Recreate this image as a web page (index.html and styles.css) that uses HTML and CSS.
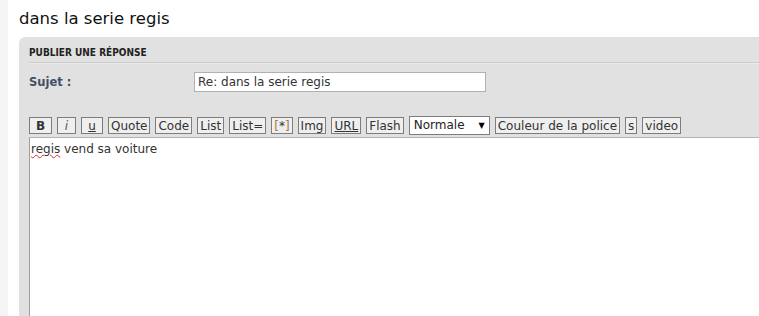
FILE: index.html
```html
<!DOCTYPE html>
<html lang="fr">

<head>
    <meta charset="UTF-8">
    <title>dans la serie regis</title>
    <link rel="stylesheet" href="styles.css">
</head>

<body>
    <div class="page">
        <h2 class="topic-title">dans la serie regis</h2>
        <div class="panel">
            <h3 class="panel-head">PUBLIER UNE RÉPONSE</h3>
            <div class="field">
                <label class="field-label" for="subject">Sujet :</label>
                <input type="text" id="subject" class="subject" value="Re: dans la serie regis">
            </div>
            <div class="toolbar">
                <button class="bb bold">B</button>
                <button class="bb italic">i</button>
                <button class="bb under short">u</button>
                <button class="bb">Quote</button>
                <button class="bb">Code</button>
                <button class="bb">List</button>
                <button class="bb">List=</button>
                <button class="bb"><span class="br">[</span>*<span class="br">]</span></button>
                <button class="bb">Img</button>
                <button class="bb under">URL</button>
                <button class="bb">Flash</button>
                <div class="size-select">Normale <span class="arrow">▼</span></div>
                <button class="bb">Couleur de la police</button>
                <button class="bb">s</button>
                <button class="bb">video</button>
            </div>
            <div class="message"><span class="typo">regis</span> vend sa voiture</div>
        </div>
    </div>
</body>

</html>
```

FILE: styles.css
```css
body {
    margin: 0;
    background-color: #ffffff;
    font-family: "DejaVu Sans", Verdana, sans-serif;
}

.page {
    border-left: 8px solid #f4f5f7;
    padding-left: 11px;
    height: 316px;
    overflow: hidden;
}

.topic-title {
    margin: 0;
    padding-top: 8px;
    height: 29px;
    font-family: "DejaVu Sans", sans-serif;
    font-size: 16.5px;
    font-weight: normal;
    color: #111;
    line-height: 22px;
}

.panel {
    background-color: #e1e1e1;
    border-radius: 6px 0 0 0;
    padding-left: 10px;
    height: 300px;
}

.panel-head {
    margin: 0;
    padding-top: 10px;
    height: 15px;
    font-family: "DejaVu Sans Condensed", "DejaVu Sans", sans-serif;
    font-size: 10px;
    font-weight: bold;
    color: #222;
    border-bottom: 1px solid #cbcbcb;
    box-shadow: 0 1px 0 #ececec;
}

.field {
    display: flex;
    align-items: center;
    padding-top: 9px;
    height: 20px;
}

.field-label {
    width: 165px;
    font-size: 11.5px;
    font-weight: bold;
    color: #425066;
}

.subject {
    box-sizing: border-box;
    width: 292px;
    height: 20px;
    margin: 0;
    padding: 0 3px;
    border: 1px solid #b1b1b1;
    background: #fff;
    font-family: "DejaVu Sans", Verdana, sans-serif;
    font-size: 12px;
    color: #333;
}

.toolbar {
    display: flex;
    align-items: center;
    gap: 5px;
    padding-top: 25px;
    height: 17px;
}

.bb {
    box-sizing: border-box;
    height: 17px;
    margin: 0;
    padding: 0 2px;
    border: 1px solid #7d7d7d;
    border-radius: 0;
    background-color: #efefef;
    font-family: "DejaVu Sans", Verdana, sans-serif;
    font-size: 12px;
    line-height: 14px;
    color: #333;
}

.bold {
    width: 23px;
    font-weight: bold;
}

.italic {
    width: 19px;
    font-style: italic;
    color: #555;
}

.under {
    text-decoration: underline;
}

.short {
    width: 22px;
}

.br {
    color: #a8793c;
}

.size-select {
    box-sizing: border-box;
    display: flex;
    justify-content: space-between;
    width: 81px;
    height: 19px;
    padding: 0 4px;
    border: 1px solid #7d7d7d;
    background: #fff;
    font-size: 12px;
    line-height: 17px;
    color: #222;
}

.arrow {
    font-size: 8px;
    color: #000;
}

.message {
    margin-top: 3px;
    height: 200px;
    padding: 4px 1px;
    background: #fff;
    border-top: 1px solid #b4b4b4;
    border-left: 1px solid #9d9d9d;
    font-size: 12px;
    color: #333;
}

.typo {
    text-decoration: underline wavy #d23030;
    text-decoration-thickness: 1px;
}
```
